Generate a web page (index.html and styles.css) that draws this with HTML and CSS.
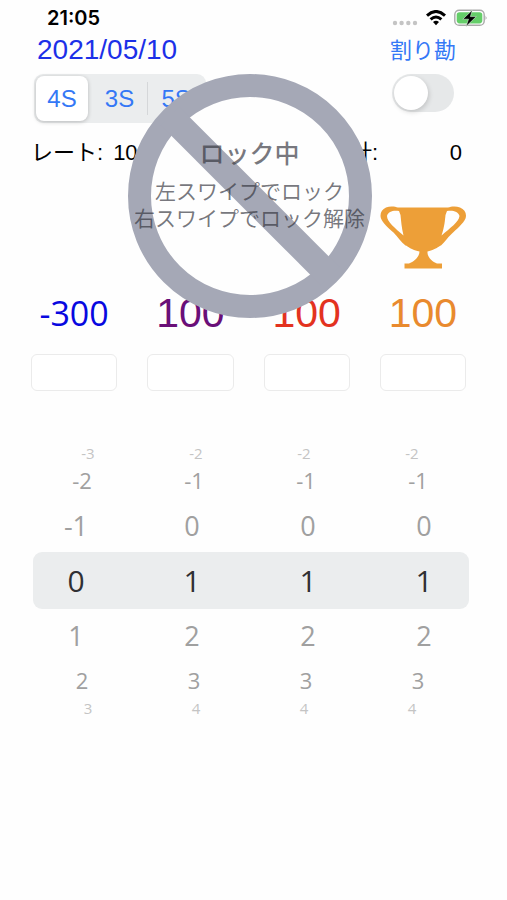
FILE: index.html
```html
<!DOCTYPE html>
<html lang="ja">
<head>
<meta charset="utf-8">
<meta name="viewport" content="width=device-width, initial-scale=1">
<title>スコア</title>
<link rel="stylesheet" href="styles.css">
</head>
<body>
<header class="status">
  <time class="clock">21:05</time>
  <div class="indicators">
    <svg width="26" height="6" viewBox="0 0 26 6" fill="#c4c4c4" aria-hidden="true"><circle cx="3" cy="3" r="2.2"/><circle cx="9.6" cy="3" r="2.2"/><circle cx="16.3" cy="3" r="2.2"/><circle cx="23" cy="3" r="2.2"/></svg>
    <svg class="wifi" width="20" height="16" viewBox="0 0 20 16" fill="none" stroke="#000" stroke-width="3" aria-hidden="true"><path d="M1 5.6Q10-2.6 19 5.6"/><path d="M4.6 9.4Q10 4.6 15.4 9.4"/><path d="M7 12Q10 9.6 13 12L10 15.2Z" fill="#000" stroke="none"/></svg>
    <svg class="battery" width="34" height="18" viewBox="0 0 34 18" aria-hidden="true"><rect x=".8" y="1.3" width="29.4" height="15" rx="4.4" fill="#fff" stroke="#a9aaa9" stroke-width="1.4"/><rect x="2.7" y="3.2" width="25.6" height="11.2" rx="2.8" fill="#65ce69"/><path d="M31.6 6.6q1.8 2.2 0 4.4z" fill="#999"/><path d="M18.4 1 8.800 10.200h5.700l-2.500 7.300 10.300-9.900h-5.900z" fill="#000" stroke="#d9f1da" stroke-width=".6"/></svg>
  </div>
</header>
<main class="board">
  <section class="top">
    <div>
      <h1 class="date">2021/05/10</h1>
      <div class="segments" role="radiogroup" aria-label="人数">
        <label><input type="radio" name="mode" checked><span>4S</span></label>
        <label><input type="radio" name="mode"><span>3S</span></label>
        <label><input type="radio" name="mode"><span>5S</span></label>
      </div>
    </div>
    <div class="split">
      <label for="split">割り勘</label>
      <input class="switch" type="checkbox" role="switch" id="split">
    </div>
  </section>
  <section class="summary">
    <p>レート:<span class="rate">100</span></p>
    <p class="total">合計:<span class="sum">0</span></p>
  </section>
  <section class="columns">
    <div class="player">
      <div class="award"></div>
      <output class="score blue">-300</output>
      <input class="entry" type="text" aria-label="1人目">
    </div>
    <div class="player">
      <div class="award"></div>
      <output class="score purple">100</output>
      <input class="entry" type="text" aria-label="2人目">
    </div>
    <div class="player">
      <div class="award"></div>
      <output class="score red">100</output>
      <input class="entry" type="text" aria-label="3人目">
    </div>
    <div class="player">
      <div class="award">
        <svg width="86" height="64" viewBox="0 0 86 64" aria-label="1位" role="img"><path fill="#ed9f38" fill-rule="evenodd" d="M18 1.5H68C71 .4 76-.2 80 1.5C85 3.5 87 8 85.500 12.500C83 18 77 22.500 71.500 28C67 32 65 36 61 39.500C59 40 55 44 47.500 45.500C47 51 52 55.500 57 57.500H62V62.500H24.500V57.500H29C34 55.500 39.500 51 39.500 45.500C31 44 28 40 25.500 39.500C21 36 18 31 13.500 26.500C8 21.500 3 17.500 1 12.500C-.5 8 1.500 3.500 6 1.500C10-.2 15 .4 18 1.500ZM19 5C14 4 8 5 7 10C7 16 15 22 23.500 29.500C21.500 21 21 14 20.500 9ZM67 5L65.500 9C65 14 64.500 21 61.500 29.500C70 22 79 16 79.500 10C78.500 5 72 4 67 5Z"/></svg>
      </div>
      <output class="score orange">100</output>
      <input class="entry" type="text" aria-label="4人目">
    </div>
  </section>
  <section class="picker" aria-label="スコア選択">
    <div class="row edge"><span>-3</span><span>-2</span><span>-2</span><span>-2</span></div>
    <div class="row far"><span>-2</span><span>-1</span><span>-1</span><span>-1</span></div>
    <div class="row near"><span>-1</span><span>0</span><span>0</span><span>0</span></div>
    <div class="row selected"><span>0</span><span>1</span><span>1</span><span>1</span></div>
    <div class="row near"><span>1</span><span>2</span><span>2</span><span>2</span></div>
    <div class="row far"><span>2</span><span>3</span><span>3</span><span>3</span></div>
    <div class="row edge"><span>3</span><span>4</span><span>4</span><span>4</span></div>
  </section>
  <aside class="lock">
    <svg class="sign" viewBox="0 0 244 244" aria-hidden="true"><circle cx="122" cy="122" r="110.500" fill="#fefefe" stroke="#a5a8b6" stroke-width="23"/><path d="M42 42 202 202" stroke="#a5a8b6" stroke-width="26"/></svg>
    <div class="message">
      <h2>ロック中</h2>
      <p>左スワイプでロック<br>右スワイプでロック解除</p>
    </div>
  </aside>
</main>
</body>
</html>
```
FILE: styles.css
```css
* { box-sizing: border-box; }
body, h1, h2, p { margin: 0; font-weight: 400; }
body {
  background: #fefefe;
  color: #000;
  font-family: "Liberation Sans", "Noto Sans CJK JP", sans-serif;
}
.status {
  display: flex;
  justify-content: space-between;
  align-items: center;
  height: 36px;
  padding: 0 19px 0 47px;
}
.clock { font: 600 20px/36px Inter, sans-serif; }
.indicators { display: flex; align-items: center; gap: 8px; }
.indicators svg:first-child { margin-top: 10px; }

.board { position: relative; padding: 0 41px 0 31px; }
.top { display: flex; justify-content: space-between; height: 98px; }
.date { padding-left: 6px; font-size: 28px; line-height: 28px; color: #1c30e8; }
.segments {
  display: flex;
  width: 172px;
  height: 49px;
  margin: 10px 0 0 3px;
  padding: 2px;
  border-radius: 9px;
  background: #ebedee;
}
.segments label { flex: 1; position: relative; }
.segments input {
  position: absolute;
  inset: 0;
  width: 100%;
  height: 100%;
  margin: 0;
  opacity: 0;
}
.segments span {
  display: block;
  border-radius: 8px;
  color: #3478f6;
  font-size: 24px;
  line-height: 45px;
  text-align: center;
}
.segments input:checked + span {
  width: 52px;
  background: #fff;
  box-shadow: 0 1px 4px rgba(0, 0, 0, .22);
}
.segments label:last-child { margin: 6px 0; border-left: 1px solid #d5d7d9; }
.segments label:last-child span { line-height: 33px; }
.split { display: flex; flex-direction: column; align-items: center; width: 86px; }
.split label {
  height: 38px;
  font-family: "Noto Sans CJK JP", sans-serif;
  font-size: 22px;
  line-height: 24px;
  color: #3478f6;
}
.switch {
  appearance: none;
  width: 62px;
  height: 38px;
  margin: 0;
  padding: 2px;
  border-radius: 19px;
  background: #e6e8e9;
}
.switch::before {
  content: "";
  display: block;
  width: 34px;
  height: 34px;
  border-radius: 50%;
  background: #fff;
  box-shadow: 1px 2px 5px rgba(0, 0, 0, .16);
}
.summary {
  display: flex;
  justify-content: space-between;
  height: 38px;
  padding-right: 4px;
  font-size: 22px;
  line-height: 38px;
}
.rate { margin-left: 10px; }
.total { display: flex; justify-content: space-between; width: 134px; }

.columns, .row {
  display: grid;
  grid-template-columns: repeat(4, 1fr);
  gap: 30px;
}
.player { display: flex; flex-direction: column; align-items: center; padding-top: 34px; }
.award { height: 66px; }
.award svg { display: block; }
.score { height: 82px; font-size: 41px; line-height: 82px; }
.blue {
  color: #0808e0;
  font-family: "Open Sans", sans-serif;
  font-size: 34px;
  font-weight: 500;
}
.purple { color: #6a0f78; }
.red { color: #e3321f; }
.orange { color: #e98a2e; }
.entry {
  width: 100%;
  height: 37px;
  border: 1px solid #ebebeb;
  border-radius: 6px;
  background: #fff;
  font-size: 20px;
  text-align: center;
}

.picker {
  margin: 53px -3px 0 2px;
  font-family: "Open Sans", sans-serif;
  color: #a0a0a0;
}
.row { padding-right: 2px; align-items: center; text-align: center; }
.edge { height: 18px; font-size: 15px; line-height: 18px; color: #c4c4c4; }
.far { height: 37px; font-size: 22px; line-height: 37px; }
.near { height: 53px; font-size: 27px; line-height: 53px; }
.selected {
  height: 57px;
  border-radius: 9px;
  background: #ebedee;
  color: #2f3033;
  font-size: 30px;
  line-height: 57px;
}
.far span:first-child { padding-left: 12px; }
.far span:nth-child(2) { padding-left: 4px; }
.far span:nth-child(3) { padding-right: 4px; }
.far span:last-child { padding-right: 12px; }
.edge span:first-child { padding-left: 24px; }
.edge span:nth-child(2) { padding-left: 8px; }
.edge span:nth-child(3) { padding-right: 8px; }
.edge span:last-child { padding-right: 24px; }

.lock {
  position: absolute;
  top: 38px;
  left: calc(50% - 5px);
  width: 244px;
  margin-left: -121px;
}
.sign { display: block; width: 100%; }
.message {
  position: absolute;
  inset: 59px -10px auto;
  font-family: "Noto Sans CJK JP", sans-serif;
  text-align: center;
  color: rgba(50, 51, 60, .66);
}
.message h2 { font-size: 25px; font-weight: 500; line-height: 38px; }
.message p { margin-top: 6px; font-size: 21px; line-height: 27px; }
```
